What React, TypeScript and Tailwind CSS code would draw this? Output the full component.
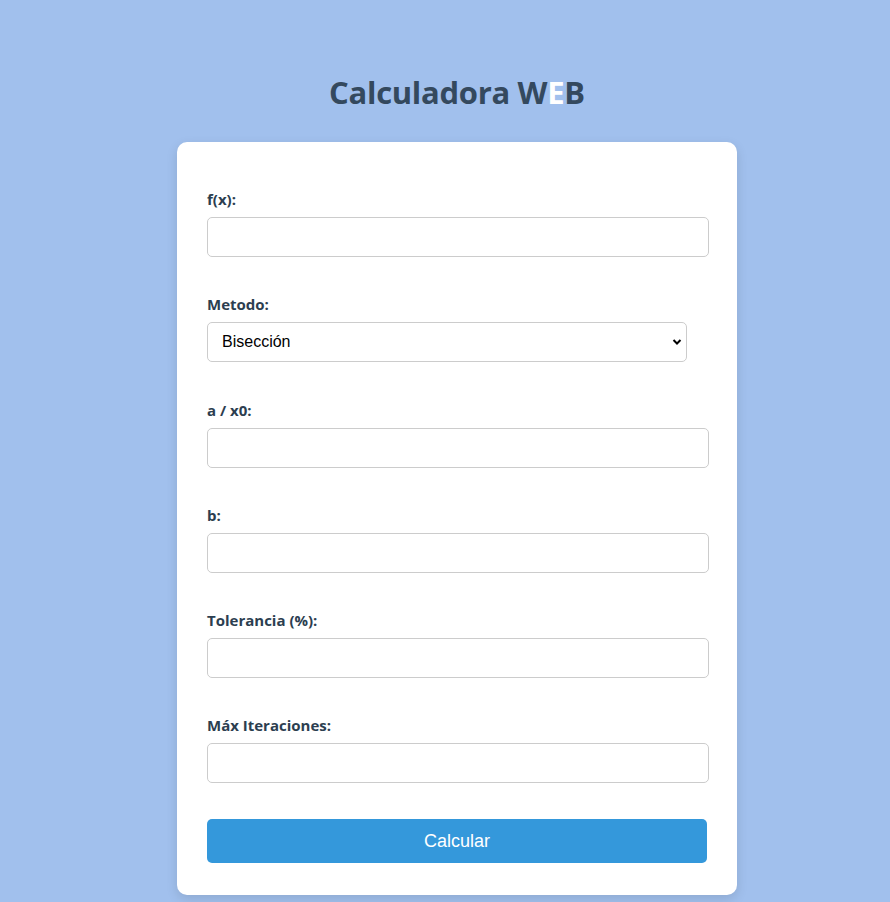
const fields = [
  { label: "f(x):" },
  { label: "Metodo:", select: true },
  { label: "a / x0:" },
  { label: "b:" },
  { label: "Tolerancia (%):" },
  { label: "Máx Iteraciones:" },
];

export default function App() {
  return (
    <div className="min-h-[902px] w-full bg-[#a1c0ed] flex flex-col items-center pt-[72px] pb-[9px] pl-[24px] font-['Open_Sans',sans-serif]">
      <h1 className="text-[31px] leading-[40px] font-bold text-[#34495e] tracking-[-0.3px]">
        Calculadora W<span className="text-white">E</span>B
      </h1>
      <div className="mt-[30px] w-[560px] bg-white rounded-[10px] shadow-[0_4px_12px_rgba(0,0,0,0.12)] px-[30px] pt-[49px] pb-[32px]">
        {fields.map((f, i) => (
          <div key={f.label} className={i === 1 ? "mb-[40px]" : "mb-[39px]"}>
            <label className="block text-[15px] leading-[17px] font-bold text-[#2c3e50] mb-[9px]">
              {f.label}
            </label>
            {f.select ? (
              <div className="relative w-[480px] h-[40px] border border-[#cccccc] rounded-[5px] flex items-center px-[14px] font-['Liberation_Sans',sans-serif] text-[16px] text-black">
                Bisección
                <svg
                  className="absolute right-[4px] top-[15px]"
                  width="10"
                  height="8"
                  viewBox="0 0 10 8"
                >
                  <path d="M1.5 2 L5 5.5 L8.5 2" fill="none" stroke="#000" strokeWidth="2" />
                </svg>
              </div>
            ) : (
              <input
                type="text"
                className="block w-[502px] h-[40px] border border-[#cccccc] rounded-[5px] px-[10px] outline-none"
              />
            )}
          </div>
        ))}
        <button className="w-[500px] h-[44px] -mt-[3px] bg-[#3498db] text-white rounded-[5px] font-['Liberation_Sans',sans-serif] text-[18px]">
          Calcular
        </button>
      </div>
    </div>
  );
}
